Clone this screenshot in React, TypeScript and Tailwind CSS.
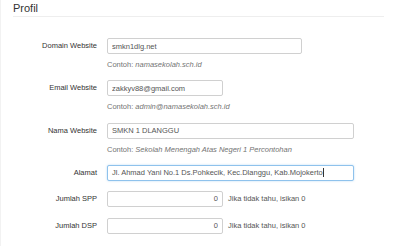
export default function App() {
    const labelCls = "w-[106px] shrink-0 pr-[10px] text-right text-[7.5px] text-[#333]";
    const inputCls =
        "h-4 rounded-[2px] border border-[#d0d0d0] bg-white px-1 text-[7.5px] text-[#555] outline-none";
    const helpCls = "mt-[5px] text-[7.5px] text-[#737373]";

    return (
        <div
            className="h-[246px] w-[400px] overflow-hidden border-l border-[#f2f2f2] bg-white"
            style={{ fontFamily: '"Liberation Sans", Arial, sans-serif' }}
        >
            <div className="px-[12px]">
                <h3 className="pt-[1px] text-[11px] leading-[14px] text-[#333]">Profil</h3>
                <div className="mt-[1px] mr-[4px] h-px bg-[#eeeeee]" />
            </div>

            <div className="mt-[21px] flex flex-col">
                {/* domain */}
                <div className="flex items-start">
                    <label className={labelCls + " leading-4"}>Domain Website</label>
                    <div className="flex flex-col">
                        <input readOnly value="smkn1dlg.net" className={inputCls + " w-[195px]"} />
                        <p className={helpCls}>
                            Contoh: <i>namasekolah.sch.id</i>
                        </p>
                    </div>
                </div>

                {/* email */}
                <div className="mt-[10px] flex items-start">
                    <label className={labelCls + " leading-4"}>Email Website</label>
                    <div className="flex flex-col">
                        <input readOnly value="zakkyv88@gmail.com" className={inputCls + " w-[116px]"} />
                        <p className={helpCls}>
                            Contoh: <i>admin@namasekolah.sch.id</i>
                        </p>
                    </div>
                </div>

                {/* nama */}
                <div className="mt-[10px] flex items-start">
                    <label className={labelCls + " leading-4"}>Nama Website</label>
                    <div className="flex flex-col">
                        <input readOnly value="SMKN 1 DLANGGU" className={inputCls + " w-[247px]"} />
                        <p className={helpCls}>
                            Contoh: <i>Sekolah Menengah Atas Negeri 1 Percontohan</i>
                        </p>
                    </div>
                </div>

                {/* alamat */}
                <div className="mt-[10px] flex items-start">
                    <label className={labelCls + " leading-4"}>Alamat</label>
                    <div className="flex h-4 w-[247px] items-center rounded-[2px] border border-[#8fc2ec] bg-white px-1 text-[7.5px] text-[#555] shadow-[0_0_2px_rgba(102,175,233,0.5)]">
                        <span>Jl. Ahmad Yani No.1 Ds.Pohkecik, Kec.Dlanggu, Kab.Mojokerto</span>
                        <span className="ml-[0.5px] h-[9px] w-px bg-[#333]" />
                    </div>
                </div>

                {/* spp */}
                <div className="mt-[10px] flex items-center">
                    <label className={labelCls}>Jumlah SPP</label>
                    <input readOnly value="0" className={inputCls + " w-[116px] text-right"} />
                    <span className="ml-[5px] text-[7.5px] text-[#555]">Jika tidak tahu, isikan 0</span>
                </div>

                {/* dsp */}
                <div className="mt-[11px] flex items-center">
                    <label className={labelCls}>Jumlah DSP</label>
                    <input readOnly value="0" className={inputCls + " w-[116px] text-right"} />
                    <span className="ml-[5px] text-[7.5px] text-[#555]">Jika tidak tahu, isikan 0</span>
                </div>
            </div>
        </div>
    );
}
